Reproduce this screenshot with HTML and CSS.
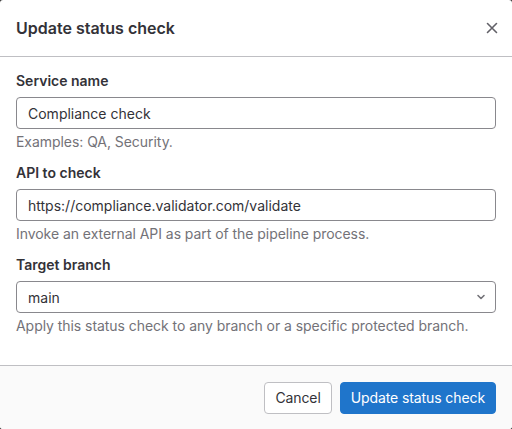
FILE: index.html
```html
<!DOCTYPE html>
<html lang="en">
<head>
<meta charset="utf-8">
<title>Update status check</title>
<link rel="stylesheet" href="styles.css">
</head>
<body>
<div class="modal">
  <header class="modal-header">
    <h2 class="modal-title">Update status check</h2>
    <button class="close" type="button" aria-label="Close">
      <svg width="16" height="16" viewBox="0 0 16 16"><path d="M3.5 3.5l9 9M12.5 3.5l-9 9" stroke="#626168" stroke-width="1.6" stroke-linecap="round"/></svg>
    </button>
  </header>
  <form class="modal-body">
    <div class="field">
      <label class="label">Service name</label>
      <input class="input" type="text" value="Compliance check">
      <p class="help">Examples: QA, Security.</p>
    </div>
    <div class="field">
      <label class="label">API to check</label>
      <input class="input" type="text" value="https://compliance.validator.com/validate">
      <p class="help">Invoke an external API as part of the pipeline process.</p>
    </div>
    <div class="field">
      <label class="label">Target branch</label>
      <div class="select">
        <span>main</span>
        <svg width="16" height="16" viewBox="0 0 16 16"><path d="M5 6.5l3 3 3-3" fill="none" stroke="#737278" stroke-width="1.6" stroke-linecap="round" stroke-linejoin="round"/></svg>
      </div>
      <p class="help">Apply this status check to any branch or a specific protected branch.</p>
    </div>
  </form>
  <footer class="modal-footer">
    <button class="btn" type="button">Cancel</button>
    <button class="btn btn-primary" type="button">Update status check</button>
  </footer>
</div>
</body>
</html>
```

FILE: styles.css
```css
* { box-sizing: border-box; }

html, body {
  margin: 0;
  height: 100%;
  background: #333;
}

body {
  font-family: Inter, "Liberation Sans", sans-serif;
  color: #333238;
  font-size: 14px;
}

.modal {
  height: 429px;
  background: #fff;
  border-radius: 3px;
  display: flex;
  flex-direction: column;
  overflow: hidden;
}

.modal-header {
  height: 57px;
  display: flex;
  align-items: center;
  justify-content: space-between;
  padding: 0 12px 0 16px;
  border-bottom: 1px solid #bfbfc3;
}

.modal-title {
  margin: 0;
  font-size: 16px;
  font-weight: 600;
}

.close {
  border: 0;
  background: none;
  padding: 0;
  width: 16px;
  height: 16px;
  display: flex;
}

.modal-body {
  flex: 1;
  margin: 0;
  padding: 14px 16px 0;
}

.field { margin-bottom: 11px; }

.label {
  display: block;
  font-weight: 600;
  font-size: 14px;
  line-height: 20px;
  margin-bottom: 6px;
}

.input, .select {
  width: 100%;
  height: 32px;
  border: 1px solid #89888d;
  border-radius: 4px;
  padding: 0 11px;
  font: inherit;
  color: #333238;
  background: #fff;
}

.select {
  display: flex;
  align-items: center;
  justify-content: space-between;
  padding-right: 6px;
}

.help {
  margin: 3px 0 0;
  color: #737278;
  line-height: 20px;
  letter-spacing: -0.05px;
}

.modal-footer {
  height: 64px;
  background: #fafafa;
  border-top: 1px solid #bfbfc3;
  display: flex;
  justify-content: flex-end;
  align-items: center;
  gap: 8px;
  padding: 0 16px;
}

.btn {
  height: 32px;
  padding: 0 10px;
  border: 1px solid #bfbfc3;
  border-radius: 4px;
  background: #fff;
  font: inherit;
  letter-spacing: -0.1px;
  color: #333238;
}

.btn-primary {
  background: #1f75cb;
  border-color: #1f75cb;
  color: #fff;
}
```
